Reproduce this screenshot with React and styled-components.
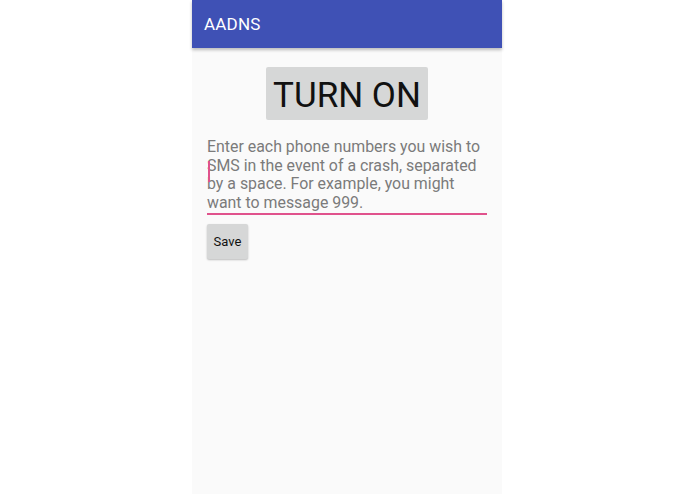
import React from 'react'
import styled, { createGlobalStyle } from 'styled-components'

const Global = createGlobalStyle`
  html, body {
    margin: 0;
    padding: 0;
    background: #ffffff;
    font-family: Roboto, "Noto Sans", sans-serif;
  }
`

const Screen = styled.div`
  width: 310px;
  height: 494px;
  margin-left: 192px;
  background: #fafafa;
  display: flex;
  flex-direction: column;
`

const AppBar = styled.header`
  height: 48px;
  flex-shrink: 0;
  background: #3f51b5;
  box-shadow: 0 2px 3px rgba(0, 0, 0, 0.25);
  display: flex;
  align-items: center;
  padding: 0 12px;
  position: relative;
  z-index: 1;
`

const Title = styled.h1`
  margin: 0;
  color: #ffffff;
  font-size: 17px;
  font-weight: 400;
  letter-spacing: 0.2px;
`

const Content = styled.main`
  display: flex;
  flex-direction: column;
  padding: 19px 15px 0;
`

const BigButton = styled.button`
  align-self: center;
  width: 162px;
  height: 53px;
  border: none;
  border-radius: 2px;
  background: #d6d7d7;
  color: #111;
  font-family: Roboto, sans-serif;
  font-size: 35px;
  padding: 4px 0 0;
`

const Field = styled.div`
  position: relative;
  margin-top: 18px;
  padding: 0 0 1px;
  border-bottom: 2px solid #e0528c;
`

const Hint = styled.p`
  margin: 0;
  color: #7b7b7b;
  font-size: 15.9px;
  line-height: 18.5px;
`

const Cursor = styled.span`
  position: absolute;
  left: 1px;
  top: 23px;
  width: 2px;
  height: 21px;
  background: #e0528c;
`

const SmallButton = styled.button`
  align-self: flex-start;
  margin-top: 9px;
  width: 41px;
  height: 35px;
  border: none;
  border-radius: 2px;
  background: #d6d7d7;
  box-shadow: 0 1px 2px rgba(0, 0, 0, 0.25);
  color: #111;
  font-family: Roboto, sans-serif;
  font-size: 13px;
  padding: 0;
`

export default function App() {
  return (
    <>
      <Global />
      <Screen>
        <AppBar>
          <Title>AADNS</Title>
        </AppBar>
        <Content>
          <BigButton>TURN ON</BigButton>
          <Field>
            <Hint>
              Enter each phone numbers you wish to SMS in the event of a crash, separated by a space. For example, you might want to message 999.
            </Hint>
            <Cursor />
          </Field>
          <SmallButton>Save</SmallButton>
        </Content>
      </Screen>
    </>
  )
}
